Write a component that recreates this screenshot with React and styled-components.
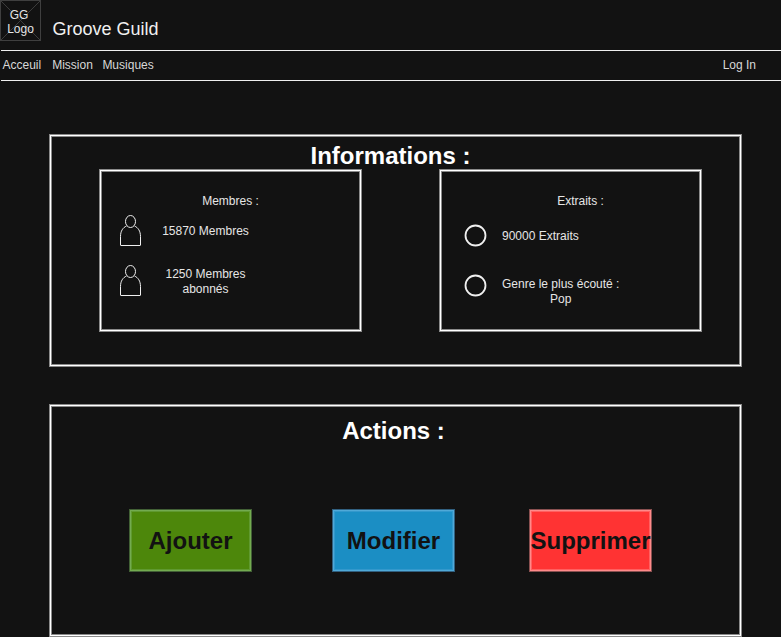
import React from 'react';
import styled, { createGlobalStyle } from 'styled-components';

const GlobalStyle = createGlobalStyle`
  html, body {
    margin: 0;
    padding: 0;
    background: #121212;
  }
  body {
    width: 781px;
    height: 637px;
    overflow: hidden;
    color: #f0f0f0;
    font-family: "Liberation Sans", Arial, sans-serif;
  }
`;

const Page = styled.div`
  width: 781px;
  height: 637px;
  box-sizing: border-box;
  overflow: hidden;
`;

const Header = styled.header`
  display: flex;
  align-items: flex-start;
  height: 50px;
`;

const Logo = styled.div`
  position: relative;
  width: 41px;
  height: 41px;
  box-sizing: border-box;
  padding-top: 2px;
  border: 1px solid #3f3f3f;
  display: flex;
  align-items: center;
  justify-content: center;
  text-align: center;
  font-size: 12px;
  line-height: 14px;
  color: #e6e6e6;
`;

const LogoCross = styled.svg`
  position: absolute;
  inset: 0;
  width: 100%;
  height: 100%;
`;

const LogoText = styled.span`
  position: relative;
`;

const LogoLine = styled.span`
  display: block;
  padding-right: ${props => props.$shift || 0}px;
`;

const SiteName = styled.h1`
  margin: 19px 0 0 11.5px;
  font-size: 18px;
  line-height: 21px;
  font-weight: 400;
  color: #f0f0f0;
`;

const Nav = styled.nav`
  display: flex;
  align-items: center;
  height: 28px;
  padding-bottom: 1px;
  margin-left: 1px;
  border-top: 1px solid #f0f0f0;
  border-bottom: 1px solid #f0f0f0;
  font-size: 12px;
  color: #d8d8d8;
`;

const NavLink = styled.a`
  margin-left: ${props => props.$gap}px;
`;

const LogIn = styled.a`
  margin-left: auto;
  margin-right: 25px;
`;

// 1px line with half-tone pixels either side, the soft 2px stroke of the reference
const softEdge = (edge, outer, inner) => `
  border: 1px solid ${edge};
  box-shadow: 0 0 0 1px ${outer}, inset 0 0 0 1px ${inner};
`;

const Panel = styled.section`
  box-sizing: border-box;
  width: 691px;
  height: 231px;
  margin: ${props => props.$top}px 0 0 50px;
  ${softEdge('#ffffff', '#8a8a8a', '#8a8a8a')}
`;

const PanelTitle = styled.h2`
  margin: 0;
  padding-top: ${props => props.$top}px;
  padding-right: ${props => props.$shift}px;
  font-size: 24px;
  line-height: 28px;
  font-weight: 700;
  text-align: center;
  color: #ffffff;
`;

const CardRow = styled.div`
  display: flex;
  gap: 79px;
  padding-left: 49px;
`;

const Card = styled.div`
  box-sizing: border-box;
  width: 261px;
  height: 161px;
  padding: 23px 19px 0;
  font-size: 12px;
  color: #e6e6e6;
  ${softEdge('#ffffff', '#8a8a8a', '#8a8a8a')}
`;

const CardTitle = styled.div`
  padding-left: ${props => props.$shift || 0}px;
  line-height: 14px;
  text-align: center;
`;

const Stat = styled.div`
  display: flex;
  align-items: center;
  height: 31px;
  margin-top: ${props => props.$top}px;
  padding-left: ${props => props.$indent || 0}px;
`;

const StatText = styled.div`
  width: ${props => props.$width || 'auto'};
  margin-left: ${props => props.$gap}px;
  padding-top: ${props => props.$drop || 0}px;
  line-height: 15px;
  text-align: center;
`;

const ActionRow = styled.div`
  display: flex;
  padding: 65px 0 0 79px;
`;

const ActionButton = styled.button`
  box-sizing: border-box;
  display: flex;
  align-items: center;
  justify-content: center;
  width: 121px;
  height: 61px;
  margin-right: ${props => props.$right || 0}px;
  padding: 0;
  background: ${props => props.$fill};
  color: #121212;
  font-family: inherit;
  font-size: 24px;
  font-weight: 700;
  white-space: nowrap;
  ${props => softEdge(props.$edge, props.$outer, props.$inner)}
`;

const PersonIcon = () => (
  <svg width="21" height="31" viewBox="0 0 21 31" fill="none" stroke="#f0f0f0" strokeWidth="1">
    <ellipse cx="10.5" cy="6.5" rx="5" ry="6" />
    <path d="M6.5 11 C3 12.5 0.5 16 0.5 21.5 V30 Q0.5 30.5 1 30.5 H20 Q20.5 30.5 20.5 30 V21.5 C20.5 16 18 12.5 14.5 11" />
  </svg>
);

const CircleIcon = () => (
  <svg width="23" height="23" viewBox="0 0 23 23" fill="none" stroke="#f0f0f0" strokeWidth="1.8">
    <circle cx="11.5" cy="11.5" r="10" />
  </svg>
);

export default function App() {
  return (
    <Page>
      <GlobalStyle />
      <Header>
        <Logo>
          <LogoCross viewBox="0 0 41 41">
            <path d="M0 0 L41 41 M41 0 L0 41" stroke="#3f3f3f" strokeWidth="1" />
          </LogoCross>
          <LogoText>
            <LogoLine $shift={3}>GG</LogoLine>
            <LogoLine>Logo</LogoLine>
          </LogoText>
        </Logo>
        <SiteName>Groove Guild</SiteName>
      </Header>
      <Nav>
        <NavLink $gap={1.5}>Acceuil</NavLink>
        <NavLink $gap={11}>Mission</NavLink>
        <NavLink $gap={9.5}>Musiques</NavLink>
        <LogIn>Log In</LogIn>
      </Nav>

      <Panel $top={54}>
        <PanelTitle $top={6} $shift={10}>Informations :</PanelTitle>
        <CardRow>
          <Card>
            <CardTitle>Membres :</CardTitle>
            <Stat $top={7}>
              <PersonIcon />
              <StatText $gap={14.5} $width="100px" $drop={2}>15870 Membres</StatText>
            </Stat>
            <Stat $top={19}>
              <PersonIcon />
              <StatText $gap={14.5} $width="100px" $drop={2}>1250 Membres abonnés</StatText>
            </Stat>
          </Card>
          <Card>
            <CardTitle $shift={20}>Extraits :</CardTitle>
            <Stat $top={12} $indent={4}>
              <CircleIcon />
              <StatText $gap={15} $drop={2}>90000 Extraits</StatText>
            </Stat>
            <Stat $top={19} $indent={4}>
              <CircleIcon />
              <StatText $gap={15} $drop={12}>Genre le plus écouté :<br />Pop</StatText>
            </Stat>
          </Card>
        </CardRow>
      </Panel>

      <Panel $top={39}>
        <PanelTitle $top={11} $shift={4}>Actions :</PanelTitle>
        <ActionRow>
          <ActionButton $fill="#4d870b" $edge="#73ab50" $outer="#426035" $inner="#609930" $right={82}>Ajouter</ActionButton>
          <ActionButton $fill="#1b8ec4" $edge="#4fa9d8" $outer="#316080" $inner="#3398cc" $right={76}>Modifier</ActionButton>
          <ActionButton $fill="#ff3333" $edge="#ff8a8a" $outer="#8a5050" $inner="#ff6060">Supprimer</ActionButton>
        </ActionRow>
      </Panel>
    </Page>
  );
}
